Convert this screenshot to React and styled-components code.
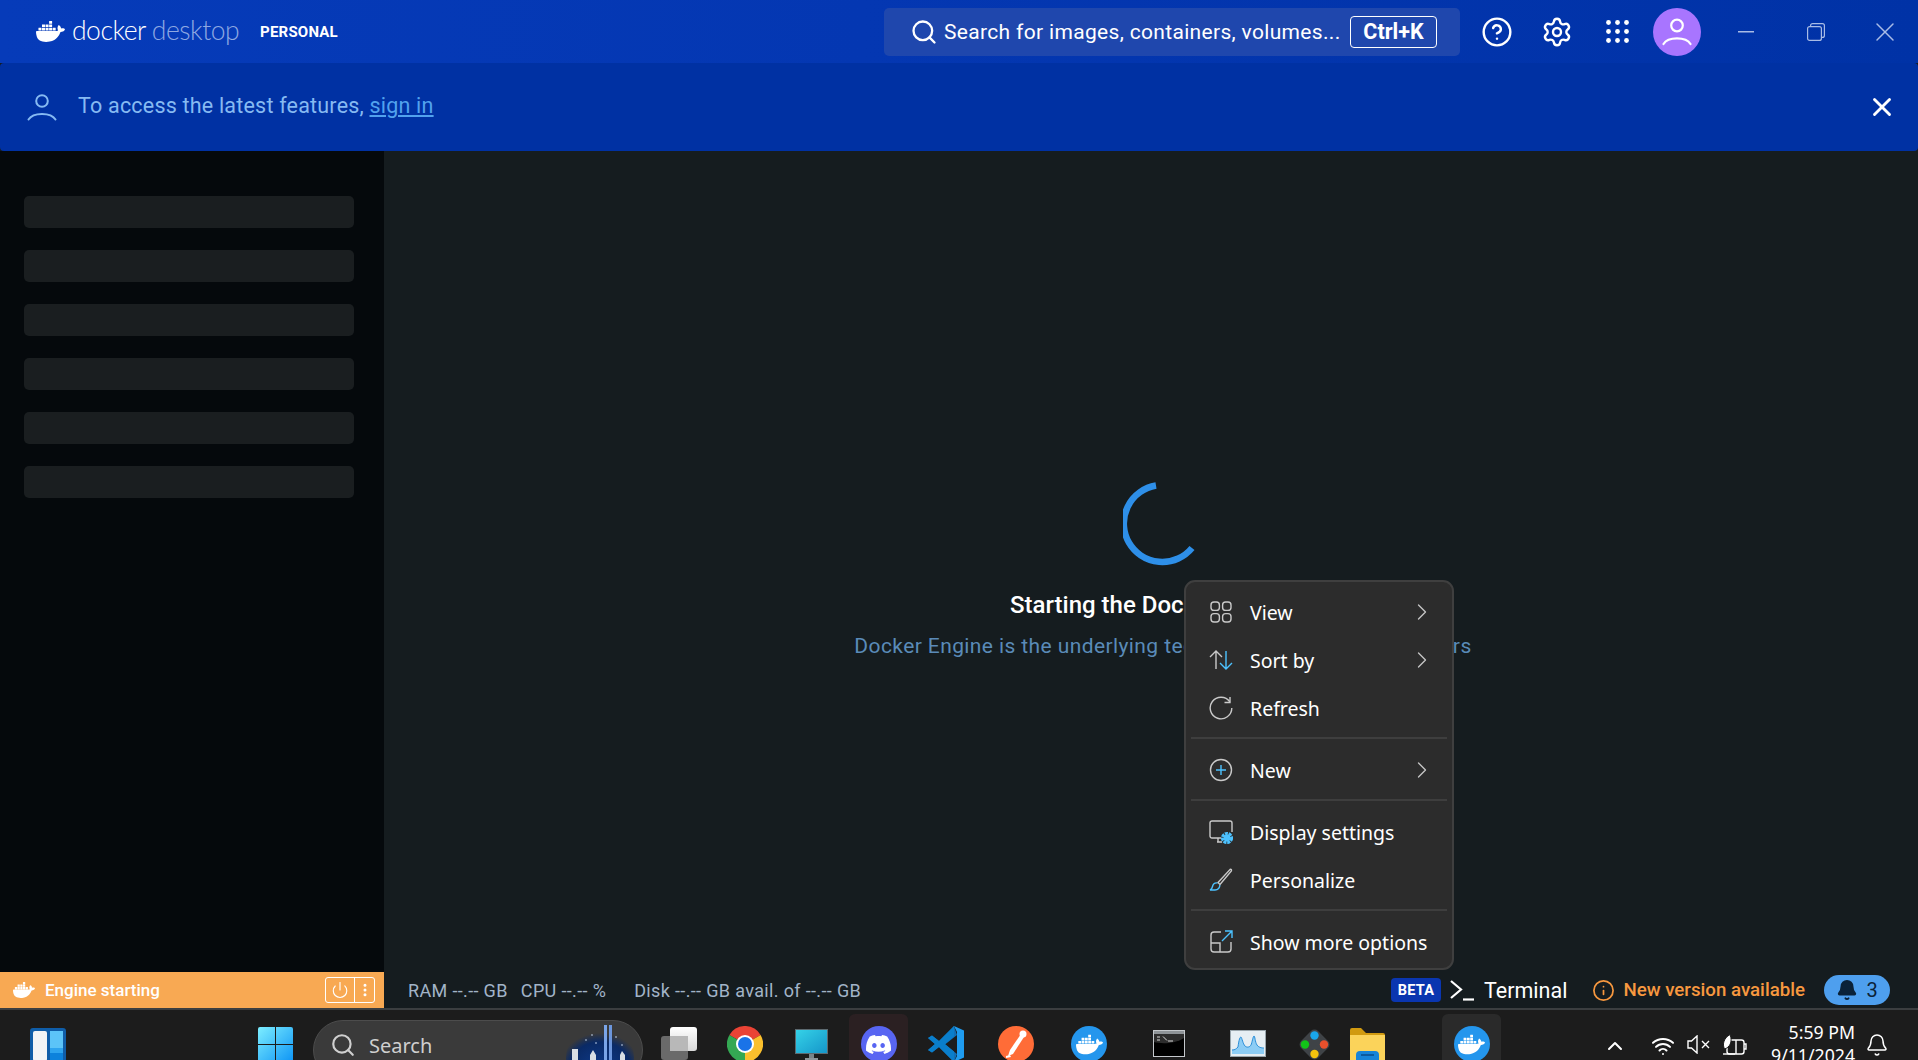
import React from "react";
import styled, { createGlobalStyle } from "styled-components";
import { SiDocker, SiDiscord } from "react-icons/si";
import {
  Search,
  CircleHelp,
  Settings,
  X,
  Power,
  EllipsisVertical,
  Info,
  Bell,
  ChevronRight,
  ChevronUp,
  Wifi,
} from "lucide-react";

const GlobalStyle = createGlobalStyle`
  html, body {
    margin: 0;
    padding: 0;
    background: #151c1f;
    overflow: hidden;
  }
  * { box-sizing: border-box; }
`;

const Page = styled.div`
  position: relative;
  width: 1918px;
  height: 1060px;
  display: flex;
  flex-direction: column;
  overflow: hidden;
  font-family: Roboto, "Liberation Sans", sans-serif;
  background: #151c1f;
`;

/* top bar */
const Header = styled.header`
  height: 63px;
  flex: none;
  display: flex;
  align-items: center;
  padding-left: 36px;
  background: linear-gradient(90deg, #063bb9 0%, #0437b2 45%, #0032a6 100%);
  color: #fff;
`;

const Wordmark = styled.div`
  display: flex;
  align-items: baseline;
  margin: 0 0 3px 7px;
  font-family: Lato, sans-serif;
  font-weight: 300;
  font-size: 26.5px;
  letter-spacing: -0.5px;
  line-height: 32px;
`;

const WordLight = styled.span`
  margin-left: 6px;
  color: #8ea8e2;
`;

const Plan = styled.span`
  margin-left: 21px;
  font-size: 15px;
  font-weight: 700;
  letter-spacing: 0.2px;
`;

const HeaderRight = styled.div`
  margin-left: auto;
  display: flex;
  align-items: center;
`;

const SearchBox = styled.div`
  width: 576px;
  height: 48px;
  margin-right: 13px;
  padding: 0 23px 0 26px;
  display: flex;
  align-items: center;
  border-radius: 5px;
  background: #1f47ad;
  font-size: 21px;
  letter-spacing: 0.33px;
  white-space: nowrap;
`;

const SearchText = styled.span`
  margin-left: 6px;
  flex: 1;
`;

const Kbd = styled.span`
  width: 87px;
  height: 32px;
  flex: none;
  display: flex;
  align-items: center;
  justify-content: center;
  border: 1px solid #fff;
  border-radius: 4px;
  font-weight: 700;
  font-size: 21.5px;
  letter-spacing: 0;
`;

const HeaderIcon = styled.div`
  width: 48px;
  height: 48px;
  margin-right: 12px;
  display: flex;
  align-items: center;
  justify-content: center;
`;

const Avatar = styled(HeaderIcon)`
  margin-right: 10px;
  border-radius: 50%;
  background: #a875ff;
`;

const WindowButton = styled.div`
  width: ${(p) => p.$w || 70}px;
  height: 48px;
  display: flex;
  align-items: center;
  justify-content: center;
  color: #a9bce6;
`;

/* sign in banner */
const Banner = styled.div`
  height: 88px;
  flex: none;
  display: flex;
  align-items: center;
  padding: 0 21px 0 27px;
  border-radius: 4px;
  background: #0031a3;
  color: #86baf2;
  font-size: 21.5px;
  letter-spacing: 0.2px;
`;

const BannerText = styled.span`
  margin: 0 0 3px 21px;
`;

const SignIn = styled.a`
  color: #52a2ee;
  text-decoration: underline;
`;

const BannerClose = styled.div`
  margin-left: auto;
  display: flex;
  color: #fff;
`;

/* body */
const Body = styled.div`
  flex: 1;
  min-height: 0;
  display: flex;
`;

const Sidebar = styled.aside`
  width: 384px;
  flex: none;
  padding: 45px 30px 0 24px;
  display: flex;
  flex-direction: column;
  gap: 22px;
  background: #05090c;
`;

const Skeleton = styled.div`
  height: 32px;
  border-radius: 5px;
  background: #1a1e20;
`;

const Main = styled.main`
  flex: 1;
  display: flex;
  flex-direction: column;
  align-items: center;
  padding: 331px 0 0 24px;
  background: #151c1f;
`;

const Title = styled.h1`
  margin: 23px 0 0;
  font-size: 24px;
  line-height: 32px;
  font-weight: 500;
  color: #fff;
  white-space: nowrap;
`;

const Description = styled.p`
  margin: 11px 0 0;
  font-size: 21px;
  line-height: 28px;
  letter-spacing: 0.4px;
  color: #5a8bb8;
  white-space: nowrap;
`;

/* status bar */
const StatusBar = styled.footer`
  height: 38px;
  flex: none;
  display: flex;
  align-items: flex-start;
  border-bottom: 2px solid #3b3e40;
  background: #151c1f;
`;

const Engine = styled.div`
  width: 384px;
  height: 36px;
  flex: none;
  display: flex;
  align-items: center;
  padding: 0 9px 0 13px;
  background: #f8a953;
  color: #fff;
  font-size: 17px;
  font-weight: 500;
`;

const EngineLabel = styled.span`
  margin-left: 10px;
`;

const EngineButtons = styled.div`
  margin-left: auto;
  width: 50px;
  height: 26px;
  display: flex;
  border: 1px solid #fff;
  border-radius: 3px;
`;

const EngineButton = styled.div`
  flex: ${(p) => p.$grow || 1};
  display: flex;
  align-items: center;
  justify-content: center;
  & + & {
    border-left: 1px solid #fff;
  }
`;

const Stat = styled.span`
  margin-left: ${(p) => p.$gap}px;
  height: 36px;
  display: flex;
  align-items: center;
  font-size: 18px;
  letter-spacing: 0.35px;
  color: #a2b4c8;
  white-space: nowrap;
`;

const StatusRight = styled.div`
  margin-left: auto;
  height: 36px;
  padding-right: 28px;
  display: flex;
  align-items: center;
`;

const Beta = styled.span`
  width: 50px;
  height: 24px;
  display: flex;
  align-items: center;
  justify-content: center;
  border-radius: 4px;
  background: #0a36b0;
  color: #fff;
  font-size: 14.5px;
  font-weight: 700;
  letter-spacing: 0.3px;
`;

const Prompt = styled.span`
  display: flex;
  margin-left: 9px;
`;

const TerminalLabel = styled.span`
  margin-left: 10px;
  font-size: 21.5px;
  color: #fff;
`;

const Update = styled.span`
  margin-left: 25px;
  display: flex;
  align-items: center;
  gap: 8px;
  font-size: 18.7px;
  font-weight: 500;
  color: #f7983f;
`;

const BellPill = styled.span`
  margin-left: 19px;
  width: 66px;
  height: 30px;
  display: flex;
  align-items: center;
  justify-content: center;
  gap: 8px;
  border-radius: 15px;
  background: #4e9fee;
  color: #0b2238;
  font-size: 20px;
`;

/* windows taskbar */
const Taskbar = styled.div`
  height: 50px;
  flex: none;
  display: flex;
  align-items: flex-start;
  overflow: hidden;
  background: #1c1c1c;
`;

const TaskIcon = styled.div`
  flex: none;
  display: flex;
  margin-left: ${(p) => p.$gap}px;
  margin-top: ${(p) => p.$top ?? 16}px;
`;

const TaskTile = styled.div`
  width: 59px;
  height: 60px;
  flex: none;
  display: flex;
  justify-content: center;
  margin-left: ${(p) => p.$gap}px;
  margin-top: 4px;
  padding-top: 12px;
  border-radius: 6px;
  background: ${(p) => p.$bg};
`;

const AppBadge = styled.div`
  width: 36px;
  height: 36px;
  display: flex;
  align-items: center;
  justify-content: center;
  border-radius: 50%;
  background: ${(p) => p.$bg};
  color: #fff;
`;

const SearchPill = styled.div`
  width: 330px;
  height: 60px;
  flex: none;
  margin: 10px 0 0 20px;
  padding: 0 8px 0 16px;
  display: flex;
  align-items: flex-start;
  border: 1px solid #4c4c4c;
  border-radius: 30px;
  background: #3a3a3a;
  color: #cfcfcf;
  font-family: "Noto Sans", sans-serif;
  font-size: 20px;
`;

const PillIcon = styled.span`
  display: flex;
  margin-top: 11px;
`;

const PillText = styled.span`
  margin: 11px 0 0 13px;
  line-height: 27px;
`;

const PillPicture = styled.div`
  margin-left: auto;
  margin-top: 4px;
  display: flex;
`;

const Clock = styled.div`
  width: 100px;
  flex: none;
  margin: 11px 0 0 8px;
  text-align: right;
  font-family: "Noto Sans", sans-serif;
  font-size: 17.7px;
  line-height: 23px;
  color: #fff;
`;

/* context menu */
const Menu = styled.div`
  position: absolute;
  left: 1184px;
  top: 580px;
  width: 270px;
  height: 390px;
  padding: 6px 5px;
  border: 2px solid #3f3f3f;
  border-radius: 11px;
  background: #2c2c2c;
  font-family: "Noto Sans", sans-serif;
  font-size: 19.5px;
  color: #fff;
`;

const MenuItem = styled.div`
  height: 48px;
  display: flex;
  align-items: center;
  padding: 0 11px 0 18px;
  svg {
    flex: none;
  }
`;

const MenuLabel = styled.span`
  margin-left: 17px;
  white-space: nowrap;
`;

const MenuArrow = styled.span`
  margin-left: auto;
  display: flex;
  color: #c4c4c4;
`;

const MenuDivider = styled.div`
  height: 2px;
  margin: 5px 0 7px;
  background: #3e3e3e;
`;

function HeaderWhale({ size, color = "#fff" }) {
  return <SiDocker size={size} color={color} />;
}

function Person({ w, h, color, sw = 2 }) {
  return (
    <svg width={w} height={h} viewBox="0 0 30 27" fill="none" stroke={color} strokeWidth={sw} strokeLinecap="round">
      <circle cx="15" cy="7" r="5.8" />
      <path d="M1.5 25.5C6 18 24 18 28.5 25.5" />
    </svg>
  );
}

function DotGrid() {
  const dots = [];
  [2.5, 11.5, 20.5].forEach((y) =>
    [2.5, 11.5, 20.5].forEach((x) => dots.push(<circle key={`${x}-${y}`} cx={x} cy={y} r="2.4" />))
  );
  return (
    <svg width="23" height="23" viewBox="0 0 23 23" fill="#fff">
      {dots}
    </svg>
  );
}

function Restore() {
  return (
    <svg width="18" height="18" viewBox="0 0 18 18" fill="none" stroke="#a9bce6" strokeWidth="1.2">
      <rect x="0.6" y="3.6" width="13.8" height="13.8" rx="2" />
      <path d="M3.6 3.4V2.6a2 2 0 0 1 2-2h9.8a2 2 0 0 1 2 2v9.8a2 2 0 0 1-2 2h-.8" />
    </svg>
  );
}

function Spinner() {
  return (
    <svg width="80" height="84" viewBox="0 0 80 84" fill="none">
      <path d="M33 3.5A38.500 38.500 0 1 0 69 66" stroke="#2e8fe8" strokeWidth="6.5" />
    </svg>
  );
}

function PromptIcon() {
  return (
    <svg width="24" height="22" viewBox="0 0 24 22" fill="none" stroke="#fff" strokeWidth="2.2">
      <path d="M1 2l10 8.5L1 19" />
      <path d="M13 20.5h11" />
    </svg>
  );
}

/* menu icons */
const gray = "#c9c9c9";
const blue = "#4cc2ff";

function ViewIcon() {
  return (
    <svg width="24" height="24" viewBox="0 0 24 24" fill="none" stroke={gray} strokeWidth="1.4">
      <rect x="2" y="2" width="8.4" height="8.4" rx="3" />
      <rect x="13.6" y="2" width="8.4" height="8.4" rx="3" />
      <rect x="2" y="13.6" width="8.4" height="8.4" rx="3" />
      <rect x="13.6" y="13.6" width="8.4" height="8.4" rx="3" />
    </svg>
  );
}

function SortIcon() {
  return (
    <svg width="24" height="24" viewBox="0 0 24 24" fill="none" strokeWidth="1.4">
      <path d="M7 21V3M1 9l6-6 6 6" stroke={gray} />
      <path d="M17 3v18M11 15l6 6 6-6" stroke={blue} />
    </svg>
  );
}

function RefreshIcon() {
  return (
    <svg width="24" height="24" viewBox="0 0 24 24" fill="none" stroke={gray} strokeWidth="1.4">
      <path d="M21 1v5.500h-5.500" />
      <path d="M20.850 5.800A10.800 10.800 0 1 0 22.800 12" />
    </svg>
  );
}

function NewIcon() {
  return (
    <svg width="24" height="24" viewBox="0 0 24 24" fill="none" strokeWidth="1.4">
      <circle cx="12" cy="12" r="10.5" stroke={gray} />
      <path d="M12 7v10M7 12h10" stroke={blue} />
    </svg>
  );
}

function DisplayIcon() {
  return (
    <svg width="24" height="24" viewBox="0 0 24 24" fill="none" stroke={gray} strokeWidth="1.4">
      <path d="M12 18H3a2 2 0 0 1-2-2V3a2 2 0 0 1 2-2h18a2 2 0 0 1 2 2v9" />
      <path d="M8 22h5M9 18v4" />
      <circle cx="18" cy="18" r="4.6" stroke={blue} strokeWidth="3" strokeDasharray="3 0.8" />
      <circle cx="18" cy="18" r="3.4" fill={blue} stroke="none" />
    </svg>
  );
}

function BrushIcon() {
  return (
    <svg width="24" height="24" viewBox="0 0 24 24" fill="none" strokeWidth="1.4">
      <path d="M9 14.5L21 1.5c1.2-.5 1.8.2 1.4 1.4L11 16.5z" stroke={gray} />
      <path d="M8.5 15c-3-.5-4.5 1.5-5 3.5-.3 1.6-1.3 3-2.500 3.500h5c3 0 5-2.500 4.800-5" stroke={blue} />
    </svg>
  );
}

function MoreIcon() {
  return (
    <svg width="24" height="24" viewBox="0 0 24 24" fill="none" strokeWidth="1.4">
      <path d="M12 2H5a3 3 0 0 0-3 3v14a3 3 0 0 0 3 3h14a3 3 0 0 0 3-3v-7" stroke={gray} />
      <path d="M2 13h9v9" stroke={gray} />
      <path d="M13 11L23 1M16 1h7v7" stroke={blue} />
    </svg>
  );
}

function MenuChevron() {
  return (
    <MenuArrow>
      <ChevronRight size={28} strokeWidth={1.2} />
    </MenuArrow>
  );
}

/* taskbar pictures */
function WidgetsIcon() {
  return (
    <svg width="36" height="36" viewBox="0 0 36 36">
      <rect width="36" height="36" rx="3" fill="#0f5da8" />
      <rect x="3" y="3" width="14" height="30" rx="2" fill="#f2f4f6" />
      <rect x="20" y="3" width="13" height="17" fill="#5cc4f8" />
      <rect x="20" y="20" width="13" height="5" fill="#2ea4ef" />
      <rect x="20" y="25" width="13" height="8" fill="#0d82dc" />
    </svg>
  );
}

function WinLogo() {
  return (
    <svg width="35" height="35" viewBox="0 0 35 35">
      <defs>
        <linearGradient id="winGrad" x1="0" y1="0" x2="1" y2="1">
          <stop offset="0" stopColor="#7deeff" />
          <stop offset="1" stopColor="#0d94f5" />
        </linearGradient>
      </defs>
      <path d="M2 0h15v17H0V2a2 2 0 0 1 2-2zM18 0h15a2 2 0 0 1 2 2v15H18zM0 18h17v17H2a2 2 0 0 1-2-2zM18 18h17v15a2 2 0 0 1-2 2H18z" fill="url(#winGrad)" />
    </svg>
  );
}

function TaskViewIcon() {
  return (
    <svg width="36" height="36" viewBox="0 0 36 36">
      <defs>
        <linearGradient id="tvGrad" x1="0" y1="0" x2="0" y2="1">
          <stop offset="0" stopColor="#fff" />
          <stop offset="1" stopColor="#d8d8d8" />
        </linearGradient>
      </defs>
      <rect x="0" y="9" width="27" height="24" rx="3" fill="#6a6a6a" />
      <rect x="9" y="0" width="27" height="24" rx="3" fill="url(#tvGrad)" />
      <rect x="9" y="9" width="18" height="15" fill="#b8b8b8" />
    </svg>
  );
}

function ChromeIcon() {
  return (
    <svg width="36" height="36" viewBox="0 0 36 36">
      <path d="M18 18L2.4 9A18 18 0 0 1 33.6 9z" fill="#ea4335" />
      <path d="M18 18L2.4 9A18 18 0 0 0 18 36z" fill="#34a853" />
      <path d="M18 18L33.6 9A18 18 0 0 1 18 36z" fill="#fbc02d" />
      <circle cx="18" cy="18" r="9" fill="#fff" />
      <circle cx="18" cy="18" r="7" fill="#1a73e8" />
    </svg>
  );
}

function MonitorIcon() {
  return (
    <svg width="33" height="33" viewBox="0 0 33 33">
      <defs>
        <linearGradient id="monGrad" x1="0" y1="0" x2="1" y2="1">
          <stop offset="0" stopColor="#35d3e8" />
          <stop offset="1" stopColor="#1595c9" />
        </linearGradient>
      </defs>
      <rect x="0.5" y="0.5" width="32" height="24" fill="url(#monGrad)" stroke="#5d6a70" />
      <rect x="14" y="25" width="5" height="4" fill="#7a8488" />
      <rect x="10" y="29" width="13" height="2" fill="#8d9599" />
    </svg>
  );
}

function VsCodeIcon() {
  return (
    <svg width="36" height="36" viewBox="0 0 36 36">
      <path d="M26 0L11 15 4 9.5 0 12l7 6-7 6 4 2.5 7-5.5 15 15 3-8-12-9.500 12-9.500z" fill="#0f6fb8" />
      <path d="M26 0l10 4.500v27L26 36l3-6V6z" fill="#1f9cf0" />
      <path d="M26 0v10.500L17 18l9 7.500V36L11 21l-7 5.500L0 24l7-6-7-6 4-2.500L11 15z" fill="#0a7ecb" />
    </svg>
  );
}

function PostmanIcon() {
  return (
    <svg width="36" height="36" viewBox="0 0 36 36">
      <circle cx="18" cy="18" r="18" fill="#ff6c37" />
      <path d="M23 8L12 24l-2 6 5-2 11-17z" fill="#fff" />
      <circle cx="25" cy="8" r="3.500" fill="#fff" />
      <path d="M8 30l4-1 1 2-5 1z" fill="#fff" />
    </svg>
  );
}

function CmdIcon() {
  return (
    <svg width="32" height="27" viewBox="0 0 32 27">
      <rect x="0.500" y="0.500" width="31" height="26" fill="#000" stroke="#c4c8cc" />
      <rect x="1" y="1" width="30" height="3" fill="#8f9498" />
      <path d="M1 4h30v4C22 14 8 14 1 12z" fill="#2d2d2d" />
      <path d="M4 7h3M4 10h3M10 6.500l4 4M15 11h5" stroke="#d8d8d8" strokeWidth="1" />
    </svg>
  );
}

function PerfIcon() {
  return (
    <svg width="36" height="27" viewBox="0 0 36 27">
      <rect x="0.500" y="0.500" width="35" height="26" fill="#e6eef3" stroke="#9aa6ad" />
      <path d="M2 24V20c3 0 4-1 6-3 1-8 2-10 3-10 1 1 2 7 4 9s5 1 6-1 2-9 3-9 1 6 3 9 6 3 7 3v6z" fill="#8dcdf5" />
      <path d="M2 20c3 0 4-1 6-3 1-8 2-10 3-10 1 1 2 7 4 9s5 1 6-1 2-9 3-9 1 6 3 9 6 3 7 3" fill="none" stroke="#2a8ed8" strokeWidth="1" />
    </svg>
  );
}

function PaletteDiamond() {
  return (
    <svg width="35" height="35" viewBox="0 0 35 35">
      <rect x="5.500" y="5.500" width="24" height="24" rx="5" transform="rotate(45 17.500 17.500)" fill="#3f4347" />
      <circle cx="17.500" cy="8.500" r="4.200" fill="#1aa6ea" />
      <circle cx="8" cy="17.500" r="4.200" fill="#12c418" />
      <circle cx="27" cy="17.500" r="4.200" fill="#e8502c" />
      <circle cx="17.500" cy="27" r="4.200" fill="#f4c20d" />
    </svg>
  );
}

function FolderIcon() {
  return (
    <svg width="35" height="35" viewBox="0 0 35 35">
      <path d="M0 2a2 2 0 0 1 2-2h9l5 5h17a2 2 0 0 1 2 2v4H0z" fill="#d19a10" />
      <path d="M0 7h35v28H0z" fill="#fbd35a" />
      <rect x="6" y="23" width="23" height="14" rx="4" fill="#1684d8" />
      <rect x="11" y="26" width="13" height="2" fill="#0c5a9e" />
    </svg>
  );
}

function CityPicture() {
  return (
    <svg width="68" height="45" viewBox="0 0 68 45">
      <defs>
        <radialGradient id="sky" cx="0.500" cy="0.700" r="0.600">
          <stop offset="0" stopColor="#0e3b8c" />
          <stop offset="0.750" stopColor="#0a2a66" />
          <stop offset="1" stopColor="#3a3a3a" />
        </radialGradient>
      </defs>
      <ellipse cx="34" cy="32" rx="34" ry="30" fill="url(#sky)" />
      <rect x="38" y="0" width="3" height="45" fill="#7aa5e8" />
      <rect x="43" y="0" width="3" height="45" fill="#6c96dc" />
      <g fill="#cfe0f5">
        <circle cx="20" cy="15" r="0.800" />
        <circle cx="26" cy="10" r="0.800" />
        <circle cx="30" cy="18" r="0.800" />
        <circle cx="50" cy="12" r="0.800" />
        <circle cx="56" cy="20" r="0.800" />
      </g>
      <path d="M6 45V24h6v21zM24 45V30l3-5 3 5v15zM54 45V30l2-4 3 4v15z" fill="#d8dee4" />
      <path d="M14 45v-8h8v8zM32 45v-9h5v9zM47 45v-7h6v7z" fill="#9fb0bf" />
    </svg>
  );
}

function TrayVolume() {
  return (
    <svg width="23" height="19" viewBox="0 0 23 19" fill="none" stroke="#fff" strokeWidth="1.400">
      <path d="M1 6v7h3.500L10 18V1L4.500 6z" />
      <path d="M15 6l7 7M22 6l-7 7" />
    </svg>
  );
}

function TrayBattery() {
  return (
    <svg width="24" height="21" viewBox="0 0 24 21" fill="none" stroke="#fff" strokeWidth="1.400">
      <rect x="4" y="6" width="17" height="14" rx="2.500" />
      <path d="M21 10h2v5h-2" />
      <path d="M13 6v14" />
      <path d="M7 0.500C1 4-1 10 1.500 15c5-1.500 8.500-7 5.500-14.500z" fill="#fff" stroke="#1c1c1c" strokeWidth="1" />
      <path d="M0 20h12" />
    </svg>
  );
}

const skeletons = [0, 1, 2, 3, 4, 5];

export default function App() {
  return (
    <Page>
      <GlobalStyle />
      <Header>
        <HeaderWhale size={29} />
        <Wordmark>
          docker<WordLight>desktop</WordLight>
        </Wordmark>
        <Plan>PERSONAL</Plan>
        <HeaderRight>
          <SearchBox>
            <Search size={28} strokeWidth={2} />
            <SearchText>Search for images, containers, volumes...</SearchText>
            <Kbd>Ctrl+K</Kbd>
          </SearchBox>
          <HeaderIcon>
            <CircleHelp size={32} strokeWidth={1.8} />
          </HeaderIcon>
          <HeaderIcon>
            <Settings size={32} strokeWidth={1.8} />
          </HeaderIcon>
          <HeaderIcon>
            <DotGrid />
          </HeaderIcon>
          <Avatar>
            <Person w={30} h={30} color="#fff" sw={2.2} />
          </Avatar>
          <WindowButton>
            <svg width="16" height="2" viewBox="0 0 16 2">
              <rect width="16" height="1.500" fill="#a9bce6" />
            </svg>
          </WindowButton>
          <WindowButton>
            <Restore />
          </WindowButton>
          <WindowButton $w={67}>
            <X size={32} strokeWidth={1.1} />
          </WindowButton>
        </HeaderRight>
      </Header>

      <Banner>
        <Person w={30} h={27} color="#86baf2" />
        <BannerText>
          To access the latest features, <SignIn>sign in</SignIn>
        </BannerText>
        <BannerClose>
          <X size={30} strokeWidth={2.300} />
        </BannerClose>
      </Banner>

      <Body>
        <Sidebar>
          {skeletons.map((i) => (
            <Skeleton key={i} />
          ))}
        </Sidebar>
        <Main>
          <Spinner />
          <Title>Starting the Docker Engine...</Title>
          <Description>Docker Engine is the underlying technology that runs containers</Description>
        </Main>
      </Body>

      <StatusBar>
        <Engine>
          <HeaderWhale size={22} />
          <EngineLabel>Engine starting</EngineLabel>
          <EngineButtons>
            <EngineButton $grow={3}>
              <Power size={18} strokeWidth={1.500} />
            </EngineButton>
            <EngineButton $grow={2}>
              <EllipsisVertical size={16} strokeWidth={2.500} />
            </EngineButton>
          </EngineButtons>
        </Engine>
        <Stat $gap={24}>RAM --.-- GB</Stat>
        <Stat $gap={13}>CPU --.-- %</Stat>
        <Stat $gap={28}>Disk --.-- GB avail. of --.-- GB</Stat>
        <StatusRight>
          <Beta>BETA</Beta>
          <Prompt>
            <PromptIcon />
          </Prompt>
          <TerminalLabel>Terminal</TerminalLabel>
          <Update>
            <Info size={23} strokeWidth={1.800} />
            New version available
          </Update>
          <BellPill>
            <Bell size={22} fill="#0b2238" strokeWidth={2} />3
          </BellPill>
        </StatusRight>
      </StatusBar>

      <Taskbar>
        <TaskIcon $gap={30} $top={18}>
          <WidgetsIcon />
        </TaskIcon>
        <TaskIcon $gap={192} $top={17}>
          <WinLogo />
        </TaskIcon>
        <SearchPill>
          <PillIcon>
            <Search size={26} strokeWidth={2} />
          </PillIcon>
          <PillText>Search</PillText>
          <PillPicture>
            <CityPicture />
          </PillPicture>
        </SearchPill>
        <TaskIcon $gap={18} $top={17}>
          <TaskViewIcon />
        </TaskIcon>
        <TaskIcon $gap={30}>
          <ChromeIcon />
        </TaskIcon>
        <TaskIcon $gap={32} $top={19}>
          <MonitorIcon />
        </TaskIcon>
        <TaskTile $gap={21} $bg="#2b2022">
          <AppBadge $bg="#5865f2">
            <SiDiscord size={25} />
          </AppBadge>
        </TaskTile>
        <TaskIcon $gap={20}>
          <VsCodeIcon />
        </TaskIcon>
        <TaskIcon $gap={34}>
          <PostmanIcon />
        </TaskIcon>
        <TaskIcon $gap={37}>
          <AppBadge $bg="#2496ed">
            <SiDocker size={27} />
          </AppBadge>
        </TaskIcon>
        <TaskIcon $gap={46} $top={20}>
          <CmdIcon />
        </TaskIcon>
        <TaskIcon $gap={45} $top={20}>
          <PerfIcon />
        </TaskIcon>
        <TaskIcon $gap={31} $top={17}>
          <PaletteDiamond />
        </TaskIcon>
        <TaskIcon $gap={18} $top={18}>
          <FolderIcon />
        </TaskIcon>
        <TaskTile $gap={57} $bg="#2a2a2a">
          <AppBadge $bg="#2496ed">
            <SiDocker size={27} />
          </AppBadge>
        </TaskTile>
        <TaskIcon $gap={102} $top={24}>
          <ChevronUp size={24} color="#fff" strokeWidth={2} />
        </TaskIcon>
        <TaskIcon $gap={24} $top={24}>
          <Wifi size={24} color="#fff" strokeWidth={2} />
        </TaskIcon>
        <TaskIcon $gap={12} $top={25}>
          <TrayVolume />
        </TaskIcon>
        <TaskIcon $gap={13} $top={24}>
          <TrayBattery />
        </TaskIcon>
        <Clock>
          5:59 PM
          <br />
          9/11/2024
        </Clock>
        <TaskIcon $gap={10} $top={23}>
          <Bell size={24} color="#fff" strokeWidth={1.500} />
        </TaskIcon>
      </Taskbar>

      <Menu>
        <MenuItem>
          <ViewIcon />
          <MenuLabel>View</MenuLabel>
          <MenuChevron />
        </MenuItem>
        <MenuItem>
          <SortIcon />
          <MenuLabel>Sort by</MenuLabel>
          <MenuChevron />
        </MenuItem>
        <MenuItem>
          <RefreshIcon />
          <MenuLabel>Refresh</MenuLabel>
        </MenuItem>
        <MenuDivider />
        <MenuItem>
          <NewIcon />
          <MenuLabel>New</MenuLabel>
          <MenuChevron />
        </MenuItem>
        <MenuDivider />
        <MenuItem>
          <DisplayIcon />
          <MenuLabel>Display settings</MenuLabel>
        </MenuItem>
        <MenuItem>
          <BrushIcon />
          <MenuLabel>Personalize</MenuLabel>
        </MenuItem>
        <MenuDivider />
        <MenuItem>
          <MoreIcon />
          <MenuLabel>Show more options</MenuLabel>
        </MenuItem>
      </Menu>
    </Page>
  );
}
